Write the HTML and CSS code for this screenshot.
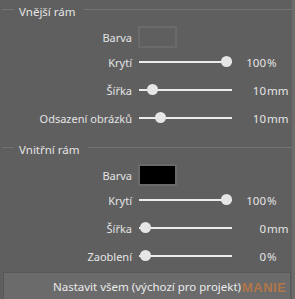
FILE: index.html
```html
<!DOCTYPE html>
<html lang="cs">
  <head>
    <meta charset="UTF-8" />
    <title>Rámeček</title>
    <link rel="stylesheet" href="styles.css">
  </head>
  <body>
    <div class="panel">
      <div class="group-title"><span>Vnější rám</span></div>
      <div class="row row-color">
        <span class="label">Barva</span>
        <span class="swatch"></span>
      </div>
      <div class="row">
        <span class="label">Krytí</span>
        <div class="slider"><span class="thumb" style="left: 81.5px"></span></div>
        <span class="value"><span class="num">100</span><span class="unit">%</span></span>
      </div>
      <div class="row">
        <span class="label">Šířka</span>
        <div class="slider"><span class="thumb" style="left: 8.2px"></span></div>
        <span class="value"><span class="num">10</span><span class="unit">mm</span></span>
      </div>
      <div class="row">
        <span class="label">Odsazení obrázků</span>
        <div class="slider"><span class="thumb" style="left: 16.2px"></span></div>
        <span class="value"><span class="num">10</span><span class="unit">mm</span></span>
      </div>

      <div class="group-title second"><span>Vnitřní rám</span></div>
      <div class="row row-color">
        <span class="label">Barva</span>
        <span class="swatch black"></span>
      </div>
      <div class="row">
        <span class="label">Krytí</span>
        <div class="slider"><span class="thumb" style="left: 81.5px"></span></div>
        <span class="value"><span class="num">100</span><span class="unit">%</span></span>
      </div>
      <div class="row">
        <span class="label">Šířka</span>
        <div class="slider"><span class="thumb" style="left: 0.5px"></span></div>
        <span class="value"><span class="num">0</span><span class="unit">mm</span></span>
      </div>
      <div class="row">
        <span class="label">Zaoblení</span>
        <div class="slider"><span class="thumb" style="left: 0.5px"></span></div>
        <span class="value"><span class="num">0</span><span class="unit">%</span></span>
      </div>

      <button class="apply">Nastavit všem (výchozí pro projekt)<span class="mark">MANIE</span></button>
    </div>
  </body>
</html>
```

FILE: styles.css
```css
html,
body {
  margin: 0;
  background-color: #5f5f5f;
}

body {
  width: 295px;
  height: 299px;
  overflow: hidden;
  font-family: "Noto Sans", "Open Sans", sans-serif;
  font-size: 11px;
  color: #e4e4e4;
}

.panel {
  width: 292px;
  height: 299px;
  border-right: 3px solid #6b6b6b;
}

.group-title {
  display: flex;
  align-items: center;
  height: 22px;
  padding-left: 2px;
  font-size: 11.5px;
}

.group-title::before,
.group-title::after {
  content: "";
  height: 1px;
  margin-top: -3px;
  background-color: #737373;
}

.group-title::before {
  width: 12px;
}

.group-title::after {
  flex: 1;
}

.group-title span {
  margin: 0 8px 0 5px;
}

.group-title.second {
  margin-top: 6px;
}

.row {
  display: grid;
  grid-template-columns: 132px 100px 1fr;
  align-items: center;
  height: 28px;
}

.row-color {
  height: 22px;
  margin-top: 4px;
}

.label {
  text-align: right;
}

.swatch {
  display: block;
  width: 35px;
  height: 18px;
  margin-left: 6px;
  border: 2px solid #6a6a6a;
}

.swatch.black {
  background-color: #000;
}

.slider {
  position: relative;
  width: 93px;
  height: 2px;
  margin-left: 7px;
  background-color: #ececec;
}

.thumb {
  position: absolute;
  top: -5px;
  width: 11px;
  height: 11px;
  border-radius: 50%;
  background-color: #e6e6e6;
}

.value {
  display: flex;
  font-size: 11.5px;
}

.num {
  width: 34px;
  text-align: right;
}

.unit {
  margin-left: 1px;
}

.apply {
  position: relative;
  display: block;
  width: 288px;
  height: 30px;
  margin: 2px 0 0 3px;
  padding: 0 0 2px;
  border: 1px solid #585858;
  background-color: #6b6b6b;
  color: #ececec;
  font-family: inherit;
  font-size: 11.5px;
}

.mark {
  position: absolute;
  left: 238px;
  top: 7px;
  font-family: "Liberation Sans", sans-serif;
  font-weight: bold;
  font-size: 13px;
  letter-spacing: 0.5px;
  color: #c87a3e;
  opacity: 0.75;
}
```
